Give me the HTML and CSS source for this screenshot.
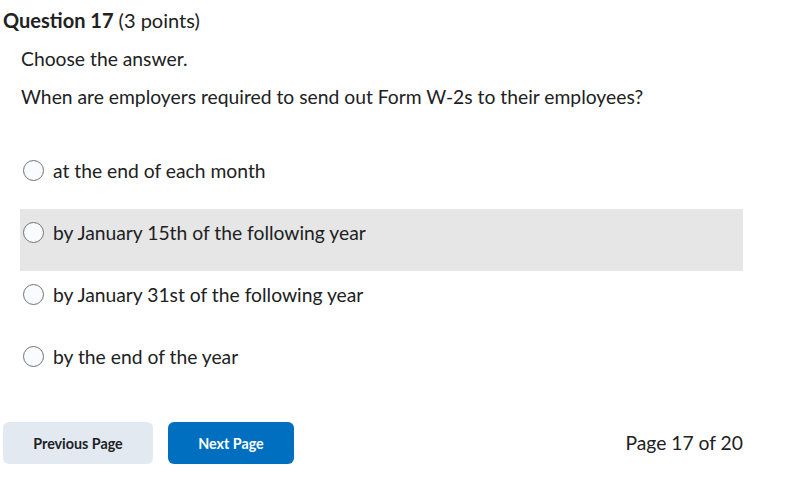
FILE: index.html
```html
<!DOCTYPE html>
<html>
<head>
<meta charset="utf-8">
<link rel="stylesheet" href="styles.css">
</head>
<body>
<div class="page">
  <h2 class="qtitle"><span class="qnum">Question 17</span> (3 points)</h2>
  <div class="qbody">
    <p class="instr">Choose the answer.</p>
    <p class="prompt">When are employers required to send out Form W-2s to their employees?</p>
    <div class="options">
      <label class="opt"><span class="radio"></span><span class="otext">at the end of each month</span></label>
      <label class="opt hover"><span class="radio"></span><span class="otext">by January 15th of the following year</span></label>
      <label class="opt"><span class="radio"></span><span class="otext">by January 31st of the following year</span></label>
      <label class="opt"><span class="radio"></span><span class="otext">by the end of the year</span></label>
    </div>
  </div>
  <div class="footer">
    <button class="btn prev">Previous Page</button>
    <button class="btn next">Next Page</button>
    <span class="pager">Page 17 of 20</span>
  </div>
</div>
</body>
</html>
```
FILE: styles.css
```css
html, body {
  margin: 0;
  padding: 0;
  background: #ffffff;
}
body {
  font-family: Lato, "Noto Sans", sans-serif;
  color: #202122;
}
.page {
  width: 743px;
  padding: 8px 0 0 3px;
  box-sizing: border-box;
}
.qtitle {
  margin: 0;
  font-size: 20px;
  font-weight: 400;
  line-height: 24px;
}
.qnum {
  font-weight: 700;
}
.qbody {
  padding-left: 18px;
}
.instr {
  margin: 15px 0 0 0;
  font-size: 19.3px;
  line-height: 24px;
}
.prompt {
  margin: 14px 0 0 0;
  font-size: 19.3px;
  line-height: 24px;
}
.options {
  margin-top: 38px;
  display: flex;
  flex-direction: column;
  margin-left: -1px;
}
.opt {
  display: flex;
  gap: 9px;
  height: 62px;
  padding: 12px 0 0 3px;
  box-sizing: border-box;
  align-items: flex-start;
  font-size: 19.3px;
  line-height: 24px;
}
.opt.hover {
  background: #e6e6e6;
}
.radio {
  width: 19px;
  height: 19px;
  border: 1px solid #6e7376;
  border-radius: 50%;
  background: #f9fbff;
  margin-top: 1px;
  flex: none;
}
.footer {
  display: flex;
  align-items: center;
  margin-top: 27px;
}
.btn {
  font-family: Lato, "Noto Sans", sans-serif;
  font-weight: 700;
  font-size: 14.3px;
  height: 42px;
  border: none;
  border-radius: 6px;
  cursor: pointer;
}
.prev {
  width: 150px;
  background: #e3e9f1;
  color: #202122;
}
.next {
  width: 126px;
  margin-left: 15px;
  background: #006fbf;
  color: #ffffff;
}
.pager {
  margin-left: auto;
  font-size: 19.3px;
  line-height: 24px;
}
```
